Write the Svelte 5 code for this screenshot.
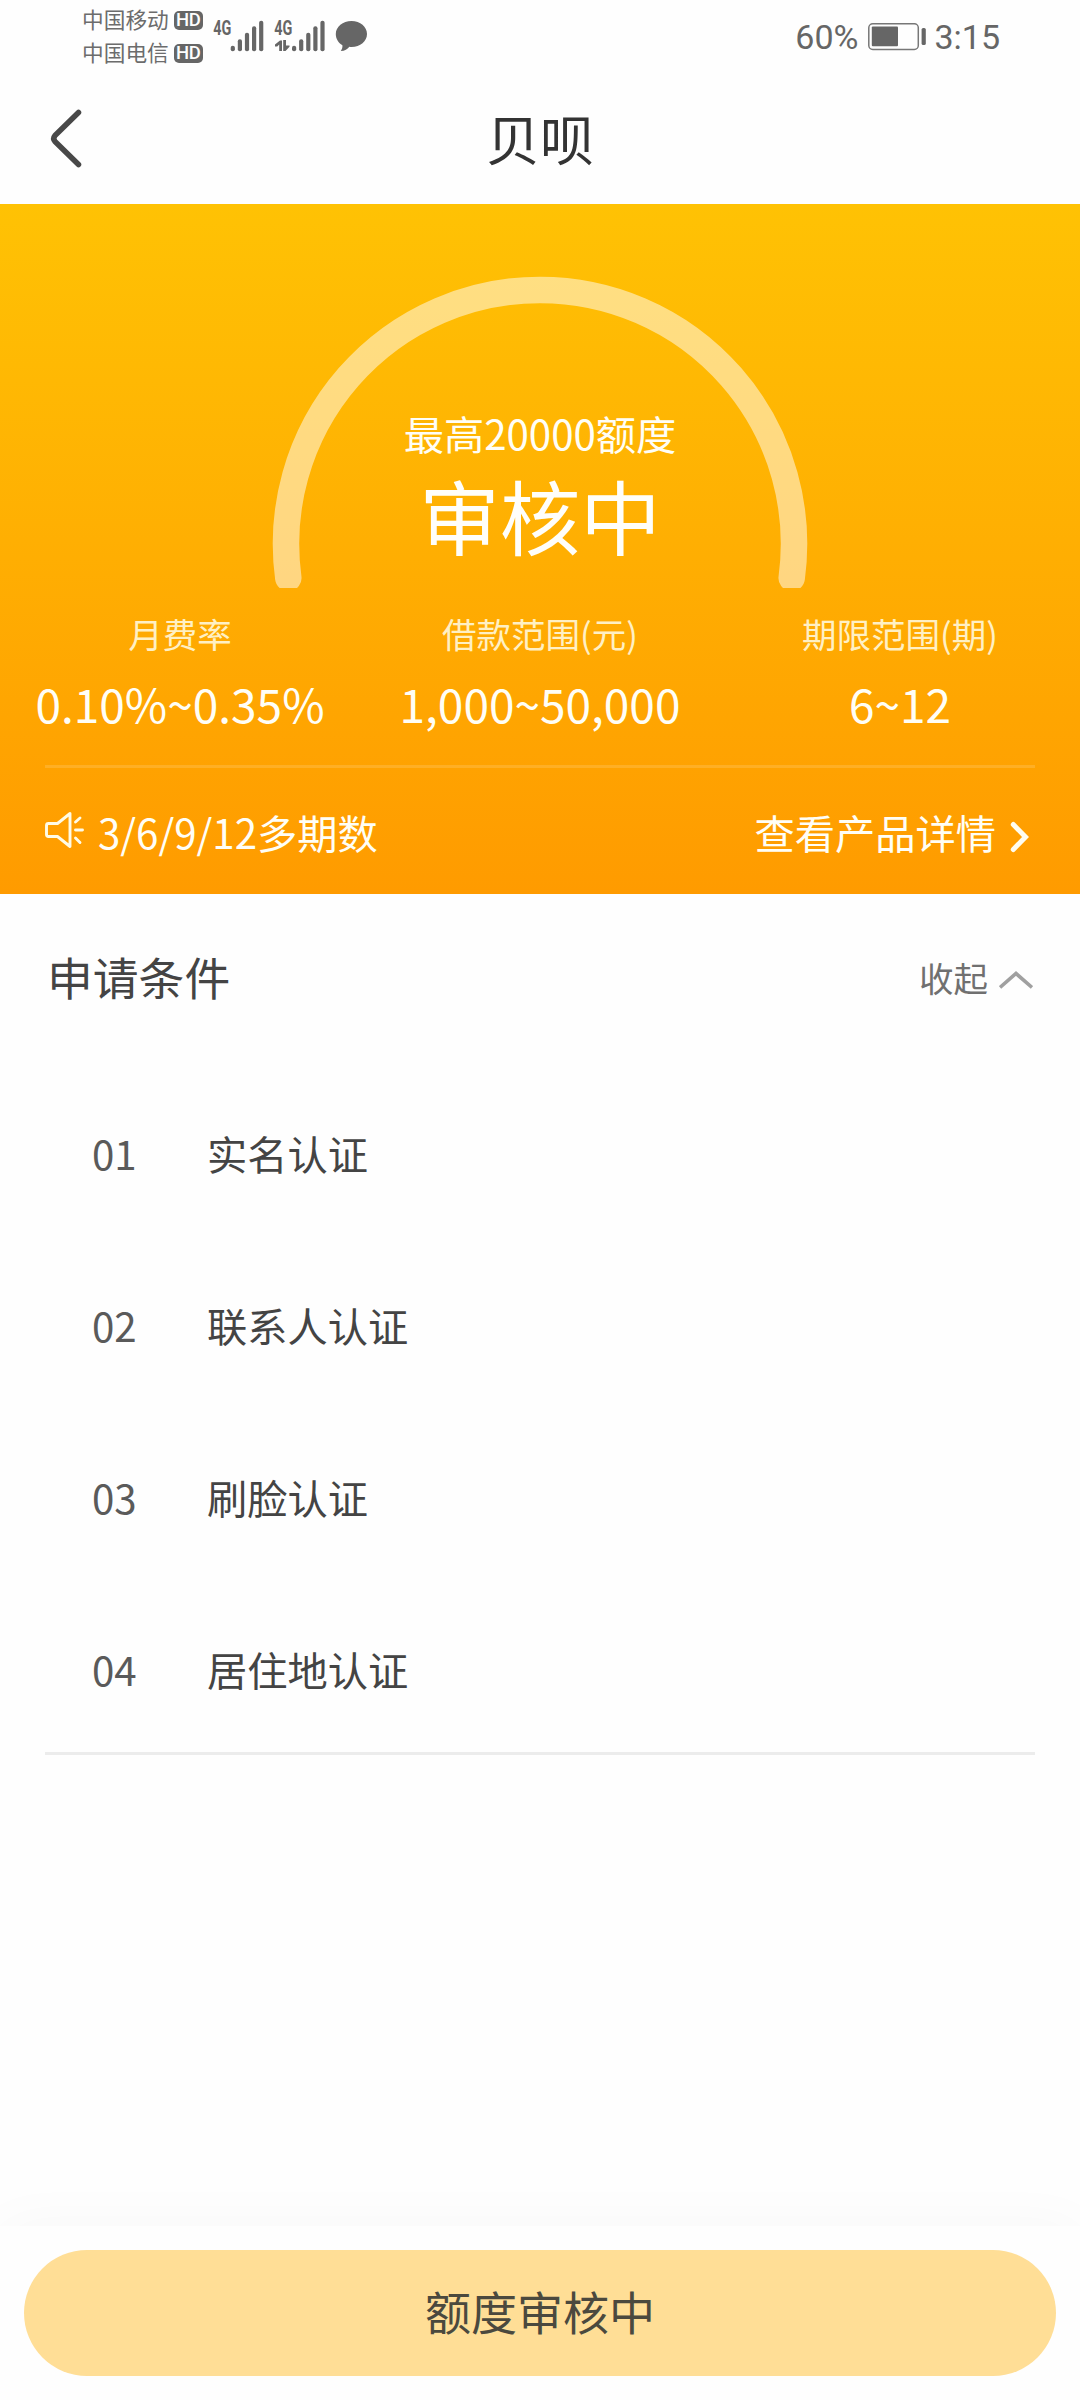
<script>
  const stats = [
    { label: '月费率', value: '0.10%~0.35%' },
    { label: '借款范围(元)', value: '1,000~50,000' },
    { label: '期限范围(期)', value: '6~12' }
  ];
  const conditions = ['实名认证', '联系人认证', '刷脸认证', '居住地认证'];
  const carriers = ['中国移动', '中国电信'];
  const bars = [5.5, 12, 18.5, 25, 30.5];
</script>

<div class="screen">
  <div class="status">
    <div class="carriers">
      {#each carriers as name}
        <div class="carrier"><span>{name}</span><b>HD</b></div>
      {/each}
    </div>
    <svg class="signals" width="160" height="40" viewBox="210 16 160 40">
      <g fill="#666">
        <text class="net" transform="translate(213.200 34.500) scale(.72 1)">4G</text>
        <text class="net" transform="translate(274.200 34.500) scale(.72 1)">4G</text>
        {#each bars as h, i}
          <rect x={230.7 + i * 7.1} y={51.2 - h} width="4.2" height={h} rx="2" />
          <rect x={292 + i * 7.1} y={51.2 - h} width="4.2" height={h} rx="2" />
        {/each}
        <path d="M275 46.500v-2l5-4h2V51h-2.800v-6.500l-2 2zM283.200 40h2.800v5.500h3.500v1.200l-4 4.300h-2.300z" />
        <path d="M351.500 21c8.800 0 15.500 5.700 15.500 13s-6.700 13-15.500 13c-.8 0-1.500 0-2.200-.2-2 2.400-4.300 4.200-8.500 4.200 1.300-1.800 1.800-3.500 1.600-5.700-4-2.400-6.600-6.500-6.600-11.300 0-7.300 7-13 15.700-13z" />
      </g>
    </svg>
    <div class="power">
      <span>60%</span>
      <svg width="60" height="30" viewBox="867 22 60 30">
        <rect x="868.800" y="23.800" width="49.500" height="25.600" rx="4" fill="none" stroke="#777" stroke-width="1.500" />
        <rect x="871.800" y="26.500" width="26.200" height="19.800" rx="1" fill="#666" />
        <rect x="921.600" y="28" width="4.200" height="17" rx="1.600" fill="#666" />
      </svg>
      <span class="clock">3:15</span>
    </div>
  </div>

  <header>
    <svg width="36" height="64" viewBox="48 106 36 64" fill="none" stroke="#484848" stroke-width="5.500" stroke-linecap="round" stroke-linejoin="round">
      <path d="M78.500 112.500L55 135.500Q52.500 138.500 55 141.500L78.500 164.500" />
    </svg>
    <h1>贝呗</h1>
  </header>

  <section class="hero">
    <div class="gauge">
      <svg class="arc" width="540" height="314" viewBox="270 274 540 314" fill="none" stroke="#fff" stroke-opacity=".5" stroke-width="26.500" stroke-linecap="round">
        <path d="M288.300 578A254 254 0 1 1 791.700 578" />
      </svg>
      <p class="limit">最高20000额度</p>
      <p class="state">审核中</p>
    </div>
    <div class="stats">
      {#each stats as s}
        <div class="stat"><span class="label">{s.label}</span><span class="value">{s.value}</span></div>
      {/each}
    </div>
    <div class="notice">
      <svg class="horn" width="42" height="40" viewBox="44 810 42 40" fill="none" stroke="#fffbe6" stroke-width="2.900" stroke-linecap="round" stroke-linejoin="round">
        <path d="M48.500 823.500H57.500L70 813.500V846.500L57.500 836.500H48.500Q46.500 836.500 46.500 834.500V825.500Q46.500 823.500 48.500 823.500Z" />
        <path d="M75.500 830H82.500M75.500 822L80 818M75.500 838L80 842.500" />
      </svg>
      <span class="terms">3/6/9/12多期数</span>
      <span class="detail">查看产品详情</span>
      <svg class="go" width="24" height="36" viewBox="1008 819 24 36" fill="none" stroke="#fffdf0" stroke-width="5" stroke-linecap="round" stroke-linejoin="miter">
        <path d="M1013.300 824.500L1025.500 837L1013.300 849.500" />
      </svg>
    </div>
  </section>

  <section class="conditions">
    <div class="heading">
      <h2>申请条件</h2>
      <span>收起</span>
      <svg width="34" height="18" viewBox="0 0 34 18" fill="none" stroke="#a0a0a0" stroke-width="3.600">
        <path d="M1 16.500L17 2.500L33 16.500" />
      </svg>
    </div>
    <ol>
      {#each conditions as c, i}
        <li><span class="num">0{i + 1}</span><span>{c}</span></li>
      {/each}
    </ol>
  </section>

  <footer><button>额度审核中</button></footer>
</div>

<style>
  :global(body) { margin: 0; background: #fefefe; }
  .screen {
    width: 1080px; height: 2400px; display: flex; flex-direction: column;
    background: #fefefe; color: #444; overflow: hidden;
    font-family: "Noto Sans CJK SC", sans-serif;
  }
  h1, h2, p, ol { margin: 0; padding: 0; font-weight: 400; }
  svg { display: block; flex: none; }

  .status { height: 72px; display: flex; align-items: flex-start; padding: 0 80px 0 82px; color: #666; }
  .carriers { padding-top: 4px; width: 128px; }
  .carrier { display: flex; align-items: center; height: 33px; font-size: 21.700px; font-weight: 400; color: #6c6c6c; white-space: nowrap; }
  .carrier span { line-height: 29px; padding-bottom: 4px; }
  .carrier b {
    margin-left: 5px; width: 29px; height: 19px; border-radius: 5px; background: #666; color: #fefefe;
    font: 500 18.500px/19.500px Roboto, sans-serif; letter-spacing: -.3px; text-align: center;
  }
  .signals { margin-top: 16px; }
  .net { font: 700 20px Roboto, sans-serif; }
  .power { margin-left: auto; display: flex; align-items: center; padding-top: 17px; font: 400 34px/40px Roboto, sans-serif; }
  .power svg { margin: 0 7px 0 9px; }

  header { height: 132px; display: grid; grid-template-columns: 84px 1fr 84px; align-items: center; }
  header svg { justify-self: end; }
  h1 { text-align: center; font-size: 54px; line-height: 80px; color: #333; padding-bottom: 1px; }

  .hero { height: 690px; flex: none; background: linear-gradient(#ffc204, #ff9b00); color: #fffef6; }
  .gauge { position: relative; height: 399px; padding-top: 200px; box-sizing: border-box; text-align: center; }
  .arc { position: absolute; left: 270px; top: 70px; }
  .limit { font-size: 40.250px; line-height: 58px; }
  .state { font-size: 80.500px; line-height: 104px; color: #fffefa; }
  .stats { display: grid; grid-template-columns: repeat(3, 360px); height: 162px; }
  .stat { display: flex; flex-direction: column; align-items: center; }
  .label { font-size: 34.500px; line-height: 60px; color: #fff0c4; }
  .value { font-size: 46px; line-height: 80px; white-space: nowrap; }
  .notice {
    margin: 0 45px; padding-right: 3px; height: 126px; border-top: 3px solid rgba(255, 255, 255, .14);
    display: flex; align-items: center; font-size: 40.250px; line-height: 60px;
  }
  .notice span { padding-top: 1px; }
  .horn { margin: 0 0 2px -1px; }
  .go { margin-top: 11px; }
  .terms { margin-left: 12px; }
  .detail { margin-left: auto; margin-right: 12px; }

  .heading { height: 168px; padding: 0 47px 0 47px; display: flex; align-items: center; }
  h2 { font-size: 45.800px; line-height: 60px; flex: 1; padding-bottom: 5px; }
  .heading span { font-size: 34.500px; line-height: 50px; color: #707070; margin-right: 11px; padding-bottom: 2px; }
  .heading svg { margin-top: 3px; }
  ol { list-style: none; margin: 0 45px; height: 685px; padding-top: 5px; border-bottom: 3px solid #ececec; }
  li { display: flex; align-items: center; height: 172px; padding-left: 47px; font-size: 40.250px; line-height: 60px; }
  li:nth-child(2) { height: 171px; }
  li:nth-child(3) { height: 174px; }
  li:nth-child(4) { height: 170px; }
  .num { width: 115px; color: #5a5a5a; }

  footer { margin-top: auto; height: 174px; flex: none; padding: 24px; box-sizing: border-box; background: #fefefe; box-shadow: 0 0 60px rgba(0, 0, 0, .03); }
  button {
    width: 1032px; height: 126px; border: 0; border-radius: 63px; padding: 0 0 6px;
    background: #ffde96; color: #4b493e; font: 400 46px/66px "Noto Sans CJK SC", sans-serif;
  }
</style>
